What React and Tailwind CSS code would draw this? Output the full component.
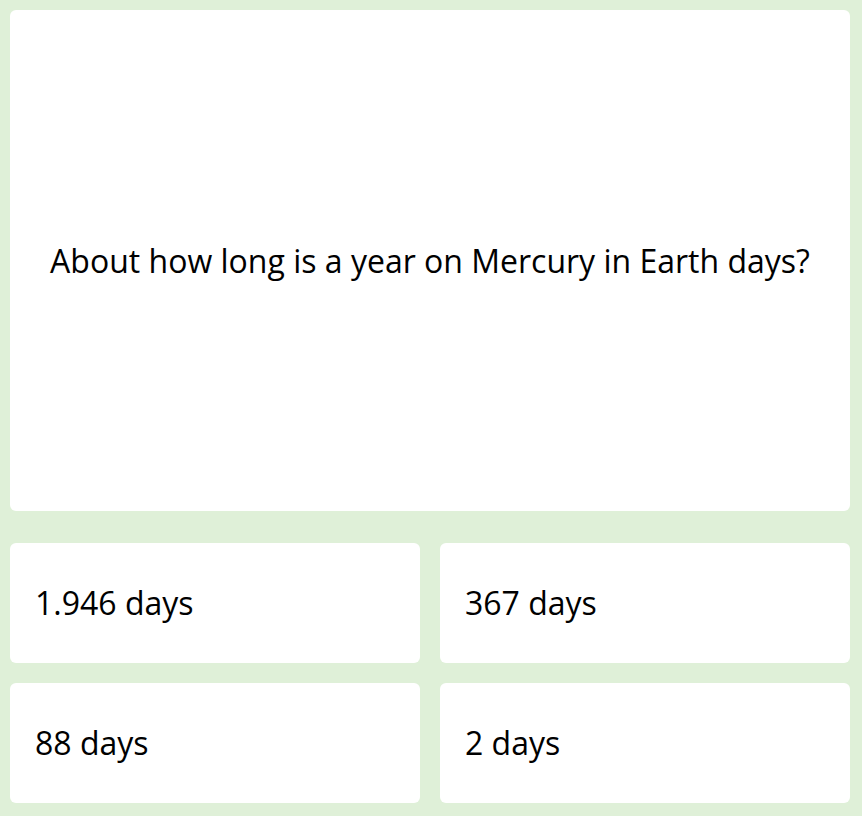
import React from 'react';

const answers = ['1.946 days', '367 days', '88 days', '2 days'];

export default function App() {
  return (
    <div
      className="min-h-[816px] w-full bg-[#dff0d8] pl-[10px] pr-[12px] pt-[10px] pb-[13px] text-black"
      style={{ fontFamily: '"Open Sans", "Noto Sans", sans-serif' }}
    >
      <div className="flex h-[501px] items-center justify-center rounded-md bg-white px-6 text-center">
        <p className="text-[32px] leading-tight">About how long is a year on Mercury in Earth days?</p>
      </div>

      <div className="mt-[32px] grid grid-cols-2 gap-x-[20px] gap-y-[20px]">
        {answers.map((a) => (
          <button
            key={a}
            className="flex h-[120px] items-center rounded-md bg-white pl-[25px] text-left text-[32px]"
          >
            {a}
          </button>
        ))}
      </div>
    </div>
  );
}
